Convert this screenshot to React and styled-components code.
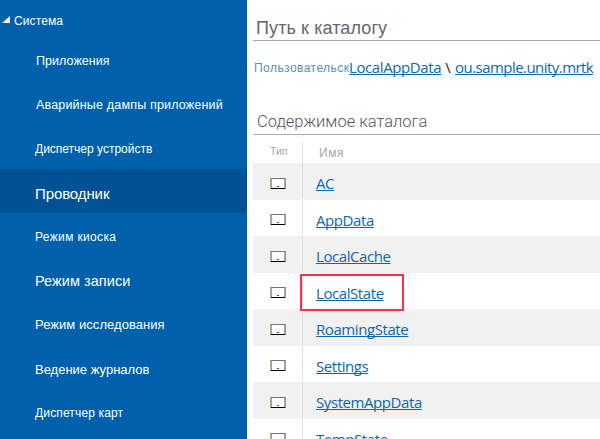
import React from 'react';
import styled, { createGlobalStyle } from 'styled-components';

const GlobalStyle = createGlobalStyle`
  * { box-sizing: border-box; }
  body { margin: 0; background: #fff; overflow: hidden; }
`;

const Page = styled.div`
  display: flex;
  width: 600px;
  height: 439px;
  overflow: hidden;
  background: #fff;
  font-family: 'Liberation Sans', Arial, sans-serif;
`;

const Sidebar = styled.nav`
  flex: none;
  width: 247px;
  height: 439px;
  background: #0060ac;
  color: #fff;
  overflow: hidden;
`;

const Label = styled.span`
  font-family: ${(p) => (p.$light ? "Roboto, sans-serif" : 'inherit')};
  font-weight: ${(p) => (p.$light ? 300 : 400)};
  font-size: ${(p) => p.$size}px;
  letter-spacing: ${(p) => p.$spacing || 0}px;
  white-space: nowrap;
`;

const SectionHeader = styled.div`
  display: flex;
  align-items: center;
  gap: 4px;
  height: 37px;
  padding: 4px 0 0 2px;

  svg {
    margin-bottom: 1px;
  }
`;

const NavItem = styled.div`
  display: flex;
  align-items: center;
  height: 44px;
  padding: ${(p) => p.$top}px 0 0 ${(p) => p.$left ?? 35}px;
  background: ${(p) => (p.$active ? '#005294' : 'transparent')};
`;

const Main = styled.main`
  flex: 1;
  min-width: 0;
  padding-left: 6px;
`;

const Heading = styled.h2`
  display: flex;
  align-items: flex-end;
  margin: 0;
  height: ${(p) => p.$height}px;
  padding: 0 0 ${(p) => p.$bottom}px ${(p) => p.$left}px;
  border-bottom: 1px solid #aaa;
  color: ${(p) => p.$color};
  font-weight: 400;
  line-height: 22px;
`;

const Link = styled.a`
  color: #0868b0;
  font-family: 'Open Sans', sans-serif;
  font-size: 15px;
  line-height: 20px;
  letter-spacing: ${(p) => p.$spacing ?? -0.42}px;
  text-decoration: underline;
  text-decoration-thickness: 1px;
  text-underline-offset: 1px;
  text-decoration-skip-ink: none;
  white-space: nowrap;
`;

const PathBar = styled.div`
  display: flex;
  align-items: center;
  height: 52px;
  padding-bottom: 1px;
`;

const ClippedCrumb = styled.div`
  flex: none;
  width: 96px;
  padding-left: 1px;
  overflow: hidden;
  color: #5590c0;
  white-space: nowrap;
`;

const Separator = styled.span`
  width: 14px;
  text-align: center;
  color: #222;
  font: 15px/20px 'Open Sans', sans-serif;
`;

const TableRow = styled.div`
  display: grid;
  grid-template-columns: 50px 1fr;
  height: 36.5px;
  background: ${(p) => (p.$shaded ? '#f1f1f1' : '#fff')};
`;

const TableHead = styled(TableRow)`
  height: 28px;
  color: #a4a4a8;
`;

const TypeCell = styled.div`
  display: flex;
  align-items: center;
  padding: 7px 0 0 17px;
  border-right: 1px solid #dcdcdc;
  margin-bottom: 2px;
`;

const HeadTypeCell = styled(TypeCell)`
  margin: 7px 0 0;
  padding: 0 0 3px 17px;
`;

const NameCell = styled.div`
  display: flex;
  align-items: center;
  padding: 4px 0 0 13px;
`;

const HeadNameCell = styled(NameCell)`
  padding: 8px 0 0 16px;
`;

const HighlightAnchor = styled.div`
  position: relative;
`;

const Highlight = styled.div`
  position: absolute;
  left: -16px;
  top: -8.5px;
  width: 104px;
  height: 37px;
  border: 2px solid #fa3048;
`;

const NAV = [
  { text: 'Приложения', size: 12.5, spacing: 0.05, top: 3, left: 36 },
  { text: 'Аварийные дампы приложений', size: 12.5, spacing: 0.18, top: 3, left: 36 },
  { text: 'Диспетчер устройств', size: 12, top: 3 },
  { text: 'Проводник', size: 15, spacing: -0.1, top: 5, active: true },
  { text: 'Режим киоска', size: 12, spacing: 0.35, top: 3 },
  { text: 'Режим записи', size: 14.5, spacing: 0.05, top: 3 },
  { text: 'Режим исследования', size: 13, spacing: 0.05, top: 3 },
  { text: 'Ведение журналов', size: 13, top: 4 },
  { text: 'Диспетчер карт', size: 12, spacing: 0.15, top: 3 },
];

const FOLDERS = [
  'AC', 'AppData', 'LocalCache', 'LocalState',
  'RoamingState', 'Settings', 'SystemAppData', 'TempState',
];

const Triangle = () => (
  <svg width="8" height="8" viewBox="0 0 8 8">
    <path d="M8 0V7H0Z" fill="#fff" />
  </svg>
);

const FolderIcon = () => (
  <svg width="16" height="12" viewBox="0 0 16 12" shapeRendering="crispEdges">
    <rect x="1" y="1" width="14" height="10" fill="#fff" />
    <rect x="1" y="0" width="14" height="1" fill="#777" />
    <rect x="0" y="0" width="1" height="11" fill="#dda04c" />
    <rect x="1" y="1" width="1" height="10" fill="#77aed8" />
    <rect x="14" y="1" width="1" height="10" fill="#dda04c" />
    <rect x="15" y="0" width="1" height="11" fill="#5ba4dc" />
    <rect x="1" y="10" width="14" height="1" fill="#000" />
    <rect x="7" y="8" width="2" height="1" fill="#554466" />
  </svg>
);

export default function App() {
  return (
    <Page>
      <GlobalStyle />
      <Sidebar>
        <SectionHeader>
          <Triangle />
          <Label $size={12} $spacing={0.1}>Система</Label>
        </SectionHeader>
        {NAV.map((item) => (
          <NavItem key={item.text} $active={item.active} $top={item.top} $left={item.left}>
            <Label $size={item.size} $spacing={item.spacing}>{item.text}</Label>
          </NavItem>
        ))}
      </Sidebar>
      <Main>
        <Heading $height={41} $bottom={1} $left={3} $color="#66666b">
          <Label $size={18} $spacing={0.1}>Путь к каталогу</Label>
        </Heading>
        <PathBar>
          <ClippedCrumb>
            <Label $size={12} $spacing={0.45}>Пользовательск</Label>
          </ClippedCrumb>
          <Link $spacing={-0.4}>LocalAppData</Link>
          <Separator>\</Separator>
          <Link $spacing={-0.55}>ou.sample.unity.mrtk</Link>
        </PathBar>
        <Heading $height={42} $bottom={1} $left={4} $color="#55555a">
          <Label $size={16.5} $light>Содержимое каталога</Label>
        </Heading>
        <TableHead>
          <HeadTypeCell><Label $size={10.5}>Тип</Label></HeadTypeCell>
          <HeadNameCell><Label $size={12} $spacing={0.5}>Имя</Label></HeadNameCell>
        </TableHead>
        {FOLDERS.map((name, i) => (
          <TableRow key={name} $shaded={i % 2 === 0}>
            <TypeCell><FolderIcon /></TypeCell>
            <NameCell>
              {name === 'LocalState' ? (
                <HighlightAnchor>
                  <Link>{name}</Link>
                  <Highlight />
                </HighlightAnchor>
              ) : (
                <Link>{name}</Link>
              )}
            </NameCell>
          </TableRow>
        ))}
      </Main>
    </Page>
  );
}
